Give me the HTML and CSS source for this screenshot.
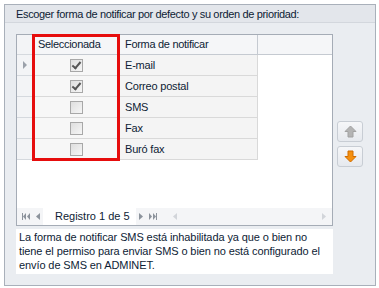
FILE: index.html
```html
<!DOCTYPE html>
<html lang="es">
<head>
    <meta charset="UTF-8">
    <title>Notificar</title>
    <link rel="stylesheet" href="styles.css">
</head>
<body>
    <div class="panel">
        <div class="panel_title">Escoger forma de notificar por defecto y su orden de prioridad:</div>
        <div class="panel_body">
            <div class="main">
                <div class="grid">
                    <div class="grid_rows">
                        <div class="cell head ind"></div>
                        <div class="cell head">Seleccionada</div>
                        <div class="cell head">Forma de notificar</div>
                        <div class="cell head filler"></div>

                        <div class="cell ind"><span class="arrow_ind"></span></div>
                        <div class="cell chk"><span class="box checked"></span></div>
                        <div class="cell">E-mail</div>
                        <div class="cell empty"></div>

                        <div class="cell ind"></div>
                        <div class="cell chk"><span class="box checked"></span></div>
                        <div class="cell">Correo postal</div>
                        <div class="cell empty"></div>

                        <div class="cell ind"></div>
                        <div class="cell chk"><span class="box"></span></div>
                        <div class="cell">SMS</div>
                        <div class="cell empty"></div>

                        <div class="cell ind"></div>
                        <div class="cell chk"><span class="box"></span></div>
                        <div class="cell">Fax</div>
                        <div class="cell empty"></div>

                        <div class="cell ind"></div>
                        <div class="cell chk"><span class="box"></span></div>
                        <div class="cell">Buró fax</div>
                        <div class="cell empty"></div>
                    </div>
                    <div class="grid_space"></div>
                    <div class="navigator">
                        <span class="nav_btn">
                            <svg width="8" height="7" viewBox="0 0 8 7"><rect x="0" y="0" width="1" height="7" fill="#8c939c"/><polygon points="4,0 1,3.5 4,7" fill="#8c939c"/><polygon points="8,0 5,3.5 8,7" fill="#8c939c"/></svg>
                        </span>
                        <span class="nav_btn">
                            <svg width="4" height="7" viewBox="0 0 4 7"><polygon points="4,0 0,3.5 4,7" fill="#8c939c"/></svg>
                        </span>
                        <span class="nav_text">Registro 1 de 5</span>
                        <span class="nav_btn">
                            <svg width="4" height="7" viewBox="0 0 4 7"><polygon points="0,0 4,3.5 0,7" fill="#8c939c"/></svg>
                        </span>
                        <span class="nav_btn">
                            <svg width="8" height="7" viewBox="0 0 8 7"><polygon points="0,0 3,3.5 0,7" fill="#8c939c"/><polygon points="4,0 7,3.5 4,7" fill="#8c939c"/><rect x="7" y="0" width="1" height="7" fill="#8c939c"/></svg>
                        </span>
                        <div class="hscroll">
                            <svg width="4" height="7" viewBox="0 0 4 7"><polygon points="4,0 0,3.5 4,7" fill="#d2d5da"/></svg>
                            <svg width="4" height="7" viewBox="0 0 4 7"><polygon points="0,0 4,3.5 0,7" fill="#d2d5da"/></svg>
                        </div>
                    </div>
                    <div class="highlight"></div>
                </div>
                <div class="side">
                    <div class="move_btn">
                        <svg width="13" height="13" viewBox="0 0 13 13"><polygon points="6.5,1 12,6.5 9,6.5 9,12 4,12 4,6.5 1,6.5" fill="#b4b4b4" stroke="#a2a2a2" stroke-width="1"/></svg>
                    </div>
                    <div class="move_btn">
                        <svg width="13" height="13" viewBox="0 0 13 13"><polygon points="4,1 9,1 9,6.5 12,6.5 6.5,12 1,6.5 4,6.5" fill="#f5900f" stroke="#d06c00" stroke-width="1"/></svg>
                    </div>
                </div>
            </div>
            <div class="message">La forma de notificar SMS está inhabilitada ya que o bien no<br>tiene el permiso para enviar SMS o bien no está configurado el<br>envío de SMS en ADMINET.</div>
        </div>
    </div>
</body>
</html>
```

FILE: styles.css
```css
*{
    padding: 0;
    margin: 0;
    box-sizing: border-box;
}

body{
    background-color: #fff;
    font-family: "Liberation Sans", Arial, sans-serif;
    font-size: 11px;
    color: #0e1c35;
}

.panel{
    margin: 4px;
    width: 372px;
    height: 282px;
    border: 1px solid #a9b0ba;
    background-color: #eaedf1;
}

.panel_title{
    height: 18px;
    line-height: 18px;
    padding-left: 11px;
    background-color: #e3e6eb;
    border-bottom: 1px solid #d3d7dd;
    letter-spacing: -0.35px;
}

.panel_body{
    padding: 11px 0 0 11px;
}

.main{
    display: flex;
}

.grid{
    position: relative;
    width: 317px;
    height: 192px;
    border: 1px solid #a5acb6;
    background-color: #fff;
    display: flex;
    flex-direction: column;
}

.grid_rows{
    display: grid;
    grid-template-columns: 16px 87px 138px 1fr;
    grid-template-rows: 20px repeat(5, 21px);
}

.cell{
    border-right: 1px solid #d9d9d9;
    border-bottom: 1px solid #d9d9d9;
    background-color: #f4f4f4;
    padding-left: 5px;
    line-height: 20px;
    white-space: nowrap;
    letter-spacing: -0.2px;
}

.cell.head{
    background-color: #f5f6f8;
    border-color: #c5cad1;
    line-height: 19px;
    letter-spacing: -0.3px;
}

.cell.filler{
    border-right: none;
}

.cell.empty{
    background-color: #fff;
    border: none;
}

.cell.ind{
    padding: 0;
    background-color: #f3f4f6;
    border-color: #d5d9de;
    display: flex;
    align-items: center;
    justify-content: center;
}

.arrow_ind{
    width: 0;
    height: 0;
    border-top: 4px solid transparent;
    border-bottom: 4px solid transparent;
    border-left: 4px solid #9ba1aa;
}

.cell.chk{
    padding: 0;
    display: flex;
    align-items: center;
    justify-content: center;
    background-color: #f7f7f7;
}

.box{
    position: relative;
    width: 13px;
    height: 13px;
    border: 1px solid #a8a8a8;
    background: linear-gradient(135deg, #dedede, #f6f6f6);
}

.box.checked::after{
    content: "";
    position: absolute;
    left: 3px;
    top: 0px;
    width: 3px;
    height: 7px;
    border-right: 2px solid #555;
    border-bottom: 2px solid #555;
    transform: rotate(40deg);
}

.grid_space{
    flex: 1;
}

.navigator{
    height: 17px;
    display: flex;
    align-items: center;
    background-color: #f4f5f7;
    padding-left: 2px;
    white-space: nowrap;
}

.nav_btn{
    display: flex;
    align-items: center;
    padding: 0 3px;
    height: 17px;
}

.nav_text{
    padding: 0 6px 0 12px;
    line-height: 17px;
    background-color: #fff;
}

.hscroll{
    flex: 1;
    margin-left: 10px;
    margin-right: 3px;
    height: 17px;
    display: flex;
    align-items: center;
    justify-content: space-between;
    padding: 0 3px;
}

.highlight{
    position: absolute;
    left: 15px;
    top: -1px;
    width: 88px;
    height: 127px;
    border: 3px solid #e60d0d;
}

.side{
    padding: 87px 0 0 4px;
    display: flex;
    flex-direction: column;
    gap: 4px;
}

.move_btn{
    width: 26px;
    height: 21px;
    border: 1px solid #c8cdd4;
    border-radius: 3px;
    background: linear-gradient(#f6f7f9, #e6e9ee);
    display: flex;
    align-items: center;
    justify-content: center;
}

.message{
    margin-top: 3px;
    width: 317px;
    height: 45px;
    background-color: #fff;
    padding: 1px 0 0 3px;
    line-height: 14px;
    letter-spacing: -0.1px;
}
```
